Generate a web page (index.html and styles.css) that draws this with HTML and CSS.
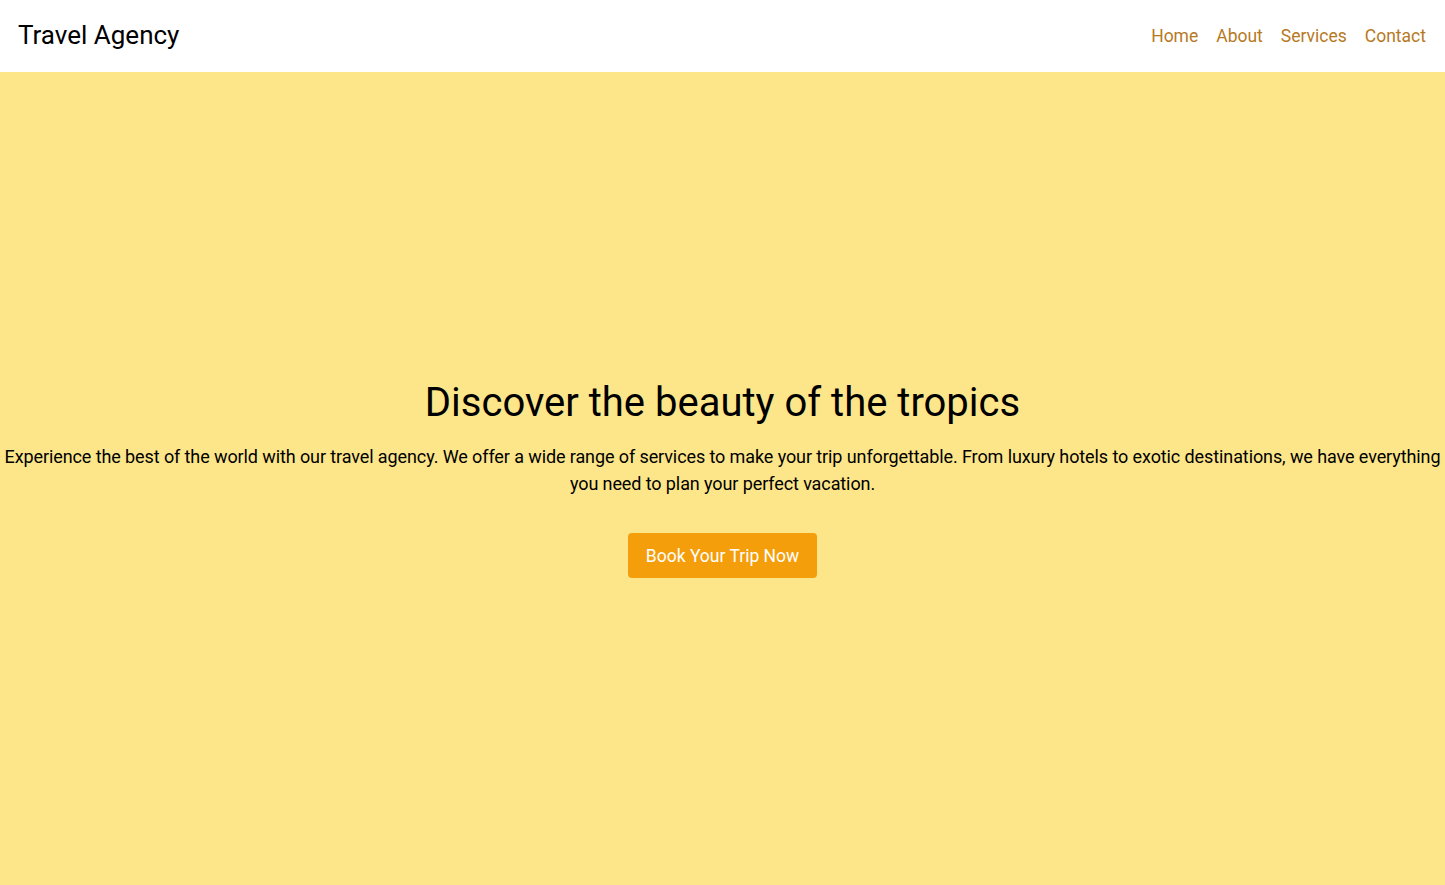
FILE: index.html
```html
<html>
<head>
  <meta name="viewport" content="width=device-width, initial-scale=1.0">
  <link rel="stylesheet" href="styles.css">
</head>
<body>

<header class="topbar">
  <h1 class="brand">Travel Agency</h1>
  <nav class="nav">
    <a href="#" class="nav-link">Home</a>
    <a href="#" class="nav-link">About</a>
    <a href="#" class="nav-link">Services</a>
    <a href="#" class="nav-link">Contact</a>
  </nav>
</header>

<section class="hero">
  <h2 class="hero-title">Discover the beauty of the tropics</h2>
  <p class="hero-text">Experience the best of the world with our travel agency. We offer a wide range of services to make your trip unforgettable. From luxury hotels to exotic destinations, we have everything you need to plan your perfect vacation.</p>
  <button class="btn">Book Your Trip Now</button>
</section>

</body>
</html>
```

FILE: styles.css
```css
body {
  margin: 0;
  font-family: Roboto, sans-serif;
  background: #fde68a;
}

.topbar {
  display: flex;
  justify-content: space-between;
  align-items: center;
  height: 72px;
  padding: 0 19px 0 18px;
  background: #fff;
}

.brand {
  margin: 0 0 2px 0;
  font-size: 26px;
  font-weight: normal;
}

.nav {
  display: flex;
  gap: 18px;
}

.nav-link {
  color: #b7791f;
  text-decoration: none;
  font-size: 17.5px;
}

.hero {
  display: flex;
  flex-direction: column;
  align-items: center;
  justify-content: center;
  height: 813px;
  text-align: center;
}

.hero-title {
  margin: 0 0 17px 0;
  font-size: 40px;
  font-weight: normal;
}

.hero-text {
  margin: 0 0 36px 0;
  font-size: 18px;
  letter-spacing: -0.1px;
  line-height: 27px;
}

.btn {
  height: 45px;
  padding: 0 18px;
  font-size: 17.5px;
  font-family: inherit;
  color: #fff;
  background: #f59e0b;
  border: none;
  border-radius: 4px;
}
```
